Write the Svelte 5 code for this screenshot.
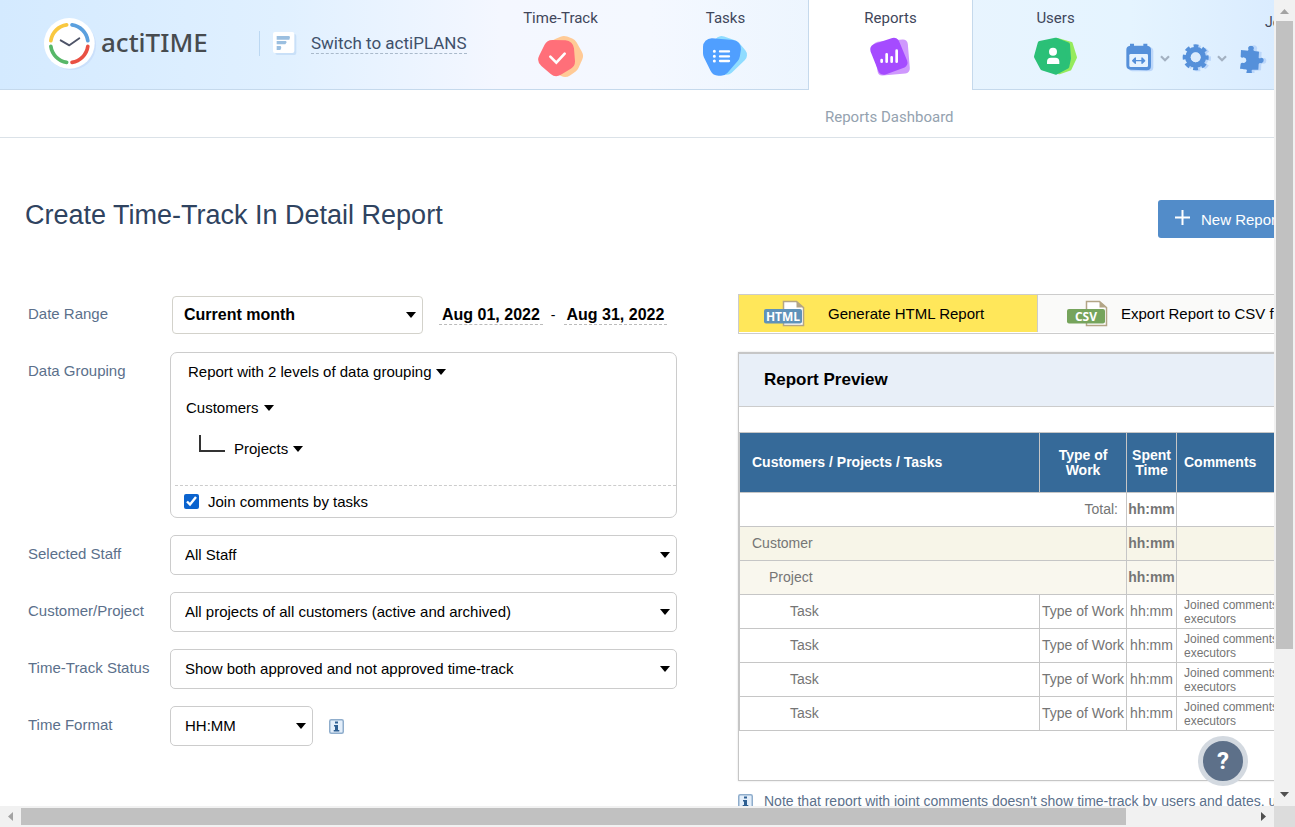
<script>
  let joinComments = $state(true);
  const filters = [
    { id: 'staff', label: 'Selected Staff', value: 'All Staff' },
    { id: 'project', label: 'Customer/Project', value: 'All projects of all customers (active and archived)' },
    { id: 'status', label: 'Time-Track Status', value: 'Show both approved and not approved time-track' }
  ];
  const tasks = [1, 2, 3, 4];
</script>

{#snippet chevron()}
  <svg class="chev" viewBox="0 0 10 7" aria-hidden="true"><path d="M1 1.200 5 5.200 9 1.200" fill="none" stroke="#a3b1c2" stroke-width="2.200" /></svg>
{/snippet}

{#snippet info()}
  <svg class="info" viewBox="0 0 15 15" aria-hidden="true">
    <rect x=".75" y=".75" width="13.5" height="13.5" rx="1.5" fill="#e3eefa" stroke="#8fadcc" stroke-width="1.5" />
    <path d="M6 2.500h3v2H6zM5 6h4v5h1.300v1.500H4.700V11H6V7.500H5z" fill="#2e5f92" />
  </svg>
{/snippet}

{#snippet fileIcon(label, color)}
  <svg class="file" viewBox="0 0 42 27" aria-hidden="true">
    <path d="M20.500 1.500h13l7 6v18h-20z" fill="#fff" stroke="#b3a586" stroke-width="1.500" />
    <path d="M33.500 1.500v6h7z" fill="#b3a586" />
    <rect x="1" y="9" width="38" height="14.500" rx="2" fill={color} />
    <text x="20" y="21" text-anchor="middle" font-family="Open Sans, sans-serif" font-size="12" font-weight="700" fill="#fff">{label}</text>
  </svg>
{/snippet}

<div class="shell">
  <div class="viewport">
    <div class="page">
      <header>
        <div class="brand">
          <a class="logo" href="#home">
            <svg class="clock" viewBox="129 45 162 162" aria-hidden="true">
              <circle cx="214" cy="130" r="74" fill="#cbe0fb" />
              <circle cx="208" cy="124" r="76" fill="#fff" />
              <g fill="none" stroke-width="11" stroke-linecap="round">
                <path d="M200 68.500A56 56 0 0 0 152.500 116" stroke="#f9c840" />
                <path d="M216 68.500A56 56 0 0 1 263.500 116" stroke="#5ba0de" />
                <path d="M152.500 133A56 56 0 0 0 200 181" stroke="#57b768" />
                <path d="M263.500 133A56 56 0 0 1 216 181" stroke="#e95043" />
              </g>
              <path d="M182 115 208 130 238 109" fill="none" stroke="#4e5468" stroke-width="5.500" stroke-linecap="round" stroke-linejoin="round" />
            </svg>
            <span>actiTIME</span>
          </a>
          <a class="switch" href="#plans">
            <svg viewBox="816 93 78 78" aria-hidden="true">
              <rect x="826" y="102" width="63" height="63" rx="6" fill="#c9e0f8" />
              <rect x="819" y="96" width="64" height="63" rx="6" fill="#fff" />
              <path d="M830 108h38l2 4-2 7h-38zM830 123h28l2 4-4 6h-26zM830 138h12l2 5-3 7h-11z" fill="#9bbfe0" />
            </svg>
            <span>Switch to actiPLANS</span>
          </a>
        </div>
        <nav>
          <a href="#time">Time-Track
            <svg viewBox="111 105 144 129" aria-hidden="true">
              <path d="M176 141 192 134 207 140 223 168 212 193 195 205 165 190Z" fill="#ffca96" stroke="#ffca96" stroke-width="52" stroke-linejoin="round" />
              <path d="M157 146 196 147 199 184 169 202 141 178Z" fill="#ff6f79" stroke="#ff6f79" stroke-width="52" stroke-linejoin="round" />
              <path d="M151 170 169 188 194 161" fill="none" stroke="#fff" stroke-width="8" stroke-linecap="round" />
            </svg>
          </a>
          <a href="#tasks">Tasks
            <svg viewBox="606 105 144 129" aria-hidden="true">
              <path d="M665 130 700 142 719 165 680 202Z" fill="#8fdcff" stroke="#8fdcff" stroke-width="44" stroke-linejoin="round" />
              <path d="M635 141 697 146 694 165 663 201 655 201 635 160Z" fill="#509fff" stroke="#509fff" stroke-width="52" stroke-linejoin="round" />
              <path d="M660 154h27M660 169h27M660 183h27" stroke="#fff" stroke-width="7" stroke-linecap="round" />
              <path d="M643 154h.1M643 169h.1M643 183h.1" stroke="#fff" stroke-width="9" stroke-linecap="round" />
            </svg>
          </a>
          <a href="#reports" class="active">Reports
            <svg viewBox="1101 105 144 129" aria-hidden="true">
              <path d="M1134 140 1209 133 1215 206 1147 212Z" fill="#cf98fd" stroke="#cf98fd" stroke-width="29" stroke-linejoin="round" />
              <path d="M1127 148 1182 130 1206 188 1151 208Z" fill="#a54bff" stroke="#a54bff" stroke-width="33" stroke-linejoin="round" />
              <path d="M1145 180v5M1160 163v22M1175 172v13M1190 152v33" stroke="#fff" stroke-width="8" stroke-linecap="round" />
            </svg>
          </a>
          <a href="#users">Users
            <svg viewBox="216 105 144 129" aria-hidden="true">
              <path d="M292 118 334 130 347 172 330 208 298 219Z" fill="#96eb5c" stroke="#96eb5c" stroke-width="8" stroke-linejoin="round" />
              <path d="M287 120 240 130 229 170 247 204 287 217 321 199 326 175 323 134Z" fill="#2bc077" stroke="#2bc077" stroke-width="14" stroke-linejoin="round" />
              <circle cx="279" cy="155" r="12" fill="#fff" />
              <path d="M261 192v-7q0-12 12-12h13q12 0 12 12v7z" fill="#fff" />
            </svg>
          </a>
        </nav>
        <div class="tools">
          <a class="user" href="#me">John Doe</a>
          <div class="toolrow">
            <button aria-label="Calendar">
              <svg class="tool" viewBox="495 130 90 90" aria-hidden="true">
                <rect x="506" y="143" width="74" height="72" rx="12" fill="#bcd7fa" />
                <path d="M510 138v-6h12v6h28v-6h12v6q11 1 11 12v49q0 13-13 13l-48-2q-13 0-13-13v-47q0-11 11-12z" fill="#5590da" />
                <rect x="508" y="163" width="56" height="39" rx="4" fill="#e6f3ff" />
                <path d="M522 183h28M526 175l-8 8 8 8zM546 175l8 8-8 8z" fill="#5590da" stroke="#5590da" stroke-width="4" stroke-linejoin="round" />
              </svg>
              {@render chevron()}
            </button>
            <button aria-label="Settings">
              <svg class="tool" viewBox="663 130 90 90" aria-hidden="true">
                <g fill="none" stroke="#bcd7fa">
                  <circle cx="711" cy="176" r="24" stroke-width="14" />
                  <circle cx="711" cy="176" r="33" stroke-width="12" stroke-dasharray="14 11.920" stroke-dashoffset="7" />
                </g>
                <g fill="none" stroke="#5590da">
                  <circle cx="704" cy="173" r="23" stroke-width="17" />
                  <circle cx="704" cy="173" r="33" stroke-width="12" stroke-dasharray="14 11.920" stroke-dashoffset="7" />
                </g>
                <circle cx="704" cy="173" r="15" fill="#dcecfd" />
              </svg>
              {@render chevron()}
            </button>
            <button aria-label="Integrations">
              <svg class="tool" viewBox="840 130 90 90" aria-hidden="true">
                <path d="M854 152l20 2q4-2 1-8 2-9 10-9t10 9q-4 7 1 9l12 2-1 18q2 4 8 0 7 0 7 8t-7 9q-6-2-8 2l-1 18-18 1q-4 2 0 8-2 7-9 7t-8-8q4-6-1-8l-18-2 2-18q3-4 8-2 9-1 9-8t-8-9q-6 3-9-2z" fill="#bcd7fa" />
                <path d="M846 151l20 2q4-2 1-8 2-7 9-7t9 7q-4 7 1 9l14 2-1 18q2 4 8 0 7 0 7 8t-7 9q-6-2-8 2l-1 17-18 0q-4 2-1 8-2 7-9 7t-8-8q4-6-1-8l-18-2 2-15q3-4 8-2 9-1 9-8t-8-9q-6 3-9-2z" fill="#5590da" />
              </svg>
            </button>
          </div>
        </div>
      </header>
      <div class="subnav"><a href="#dashboard">Reports Dashboard</a></div>

      <main>
        <div class="heading">
          <h1>Create Time-Track In Detail Report</h1>
          <button class="new">
            <svg viewBox="0 0 15 15" aria-hidden="true"><path d="M7.500 0v15M0 7.500h15" stroke="#fff" stroke-width="2" /></svg>
            New Report
          </button>
        </div>

        <div class="columns">
          <form>
            <label for="range">Date Range</label>
            <div class="line">
              <div class="select range"><select id="range"><option>Current month</option></select></div>
              <div class="dates">
                <button type="button">Aug 01, 2022</button><span>-</span><button type="button">Aug 31, 2022</button>
              </div>
            </div>

            <span class="label">Data Grouping</span>
            <div class="grouping">
              <button type="button" class="drop levels">Report with 2 levels of data grouping</button>
              <button type="button" class="drop">Customers</button>
              <div class="nested"><i></i><button type="button" class="drop">Projects</button></div>
              <div class="join">
                <input type="checkbox" id="join" bind:checked={joinComments} />
                <label for="join">Join comments by tasks</label>
              </div>
            </div>

            {#each filters as f}
              <label for={f.id}>{f.label}</label>
              <div class="select"><select id={f.id}><option>{f.value}</option></select></div>
            {/each}

            <label for="format">Time Format</label>
            <div class="line">
              <div class="select format"><select id="format"><option>HH:MM</option></select></div>
              {@render info()}
            </div>
          </form>

          <section>
            <div class="actions">
              <button class="html">{@render fileIcon('HTML', '#5f92b9')}<span>Generate HTML Report</span></button>
              <button class="csv">{@render fileIcon('CSV', '#76a45c')}<span>Export Report to CSV file</span></button>
            </div>
            <div class="preview">
              <h2>Report Preview</h2>
              <table>
                <colgroup><col class="c1" /><col class="c2" /><col class="c3" /><col /></colgroup>
                <thead>
                  <tr><th class="left">Customers / Projects / Tasks</th><th>Type of Work</th><th>Spent Time</th><th class="left com">Comments</th></tr>
                </thead>
                <tbody>
                  <tr><td colspan="2" class="total">Total:</td><td class="time"><b>hh:mm</b></td><td></td></tr>
                  <tr class="customer"><td colspan="2">Customer</td><td class="time"><b>hh:mm</b></td><td></td></tr>
                  <tr class="project"><td colspan="2" class="lvl2">Project</td><td class="time"><b>hh:mm</b></td><td></td></tr>
                  {#each tasks as t (t)}
                    <tr><td class="lvl3">Task</td><td class="time">Type of Work</td><td class="time">hh:mm</td><td class="com small">Joined comments of<br />executors</td></tr>
                  {/each}
                </tbody>
              </table>
            </div>
            <p class="note">{@render info()}<span>Note that report with joint comments doesn't show time-track by users and dates, unlike</span></p>
          </section>
        </div>
      </main>
    </div>
    <button class="help" aria-label="Help">?</button>
  </div>

  <div class="bar v" aria-hidden="true">
    <svg viewBox="0 0 21 21"><path d="M6 14h9l-4.500-5z" fill="#a3a3a3" /></svg>
    <div class="thumb"></div><div class="rest"></div>
    <svg viewBox="0 0 21 21"><path d="M6 7h9l-4.500 5z" fill="#505050" /></svg>
  </div>
  <div class="bar h" aria-hidden="true">
    <svg viewBox="0 0 21 21"><path d="M13 6v9l-5-4.500z" fill="#a3a3a3" /></svg>
    <div class="thumb"></div><div class="rest"></div>
    <svg viewBox="0 0 21 21"><path d="M8 6v9l5-4.500z" fill="#505050" /></svg>
  </div>
  <div class="corner"></div>
</div>

<style>
  :global(body) { margin: 0; background: #fff; }
  .shell {
    display: grid;
    grid-template-columns: minmax(0, 1fr) 21px;
    grid-template-rows: minmax(0, 1fr) 21px;
    height: 100vh;
    font-family: "Liberation Sans", Arial, sans-serif;
    font-size: 15px;
    color: #000;
  }
  .viewport { position: relative; overflow: hidden; }
  .page { min-width: 1420px; }
  button { font: inherit; color: inherit; border: 0; background: none; padding: 0; cursor: pointer; }
  a { color: inherit; text-decoration: none; }
  svg { display: block; flex: none; }

  header {
    display: flex;
    height: 90px;
    box-sizing: border-box;
    font-family: Roboto, sans-serif;
    color: #40465a;
    background: linear-gradient(90deg, #d4eaff 0, #e0f0ff 280px, #f4f7ff 500px, #f4f8ff 650px, #e9f4fe 900px, #e5f4ff 1130px, #daecff 1274px);
    box-shadow: inset 0 -1px #c5d9ec;
  }
  .brand { display: flex; align-items: center; width: 478px; flex: none; padding: 0 0 3px 43px; box-sizing: border-box; }
  .logo { display: flex; align-items: center; gap: 4px; width: 216px; height: 54px; color: #474b4f; font: 500 26px/54px "Noto Sans", sans-serif; }
  .logo span { margin-top: -4px; }
  .clock { width: 54px; height: 54px; }
  .switch { display: flex; align-items: center; gap: 13px; height: 25px; padding-left: 12px; border-left: 1px solid #bcd8f2; font-size: 17px; line-height: 20px; color: #40506a; }
  .switch svg { width: 26px; height: 26px; }
  .switch span { border-bottom: 1px dashed #a9b9ca; }
  nav { display: flex; flex: none; font-size: 15px; line-height: 18px; }
  nav a { display: flex; flex-direction: column; align-items: center; gap: 8px; width: 165px; box-sizing: border-box; padding-top: 9px; }
  nav svg { width: 48px; height: 43px; }
  nav a.active { background: #fff; border: solid #c5d9ec; border-width: 0 1px; }
  .tools { margin-left: -13px; }
  .user { display: block; padding: 13px 0 0 140px; font-size: 14px; line-height: 18px; }
  .toolrow { display: flex; gap: 12px; padding-top: 12px; }
  .toolrow button { display: flex; align-items: center; gap: 5px; }
  .tool { width: 30px; height: 30px; }
  .chev { width: 10px; height: 7px; }
  .subnav { height: 48px; box-sizing: border-box; border-bottom: 1px solid #dbe2e8; padding: 17px 0 0 825px; font: 15px/20px Roboto, sans-serif; color: #94a2af; }

  main { padding: 62px 25px 0; }
  .heading { display: flex; justify-content: space-between; height: 38px; }
  h1 { margin: 0; font-size: 27px; line-height: 30px; font-weight: 400; color: #2f4360; }
  .new { display: flex; align-items: center; gap: 11px; width: 237px; padding-left: 17px; border-radius: 3px; background: #528cc9; color: #fff; }
  .new svg { width: 15px; height: 15px; margin-bottom: 3px; }

  .columns { display: grid; grid-template-columns: 649px minmax(0, 1fr); gap: 61px; padding: 56px 0 0 3px; }
  form { display: grid; grid-template-columns: 142px minmax(0, 1fr); row-gap: 17px; align-content: start; padding-top: 1px; }
  form > label, .label { line-height: 38px; color: #5b708b; }
  .line { display: flex; align-items: center; gap: 16px; height: 40px; }
  .select { position: relative; }
  .select::after, .drop::after { content: ""; border: 5px solid transparent; border-top: 6px solid #000; border-bottom: 0; }
  .select::after { position: absolute; right: 7px; top: 17px; pointer-events: none; }
  .range::after { top: 16px; }
  select { display: block; width: 100%; height: 40px; box-sizing: border-box; padding: 0 24px 2px 14px; appearance: none; border: 1px solid #ccc; border-radius: 5px; background: #fff; font: inherit; color: #000; }
  .range { width: 251px; margin-left: 2px; }
  .range select { height: 38px; padding-left: 11px; border-color: #d3d2cb; border-radius: 4px; font-size: 16px; font-weight: 700; }
  .format { width: 143px; }
  .dates { display: flex; align-items: center; font-size: 16px; gap: 8px; }
  .dates button { padding: 0 3px; border-bottom: 1px dashed #bbb; font-weight: 700; line-height: 18px; }
  .dates span { font-size: 14px; }
  .info { width: 15px; height: 15px; }
  .grouping { display: flex; flex-direction: column; align-items: flex-start; height: 166px; box-sizing: border-box; border: 1px solid #ccc; border-radius: 7px; padding: 10px 0 0 4px; }
  .drop { display: flex; align-items: center; gap: 5px; margin-left: 11px; line-height: 18px; }
  .drop.levels { margin: 0 0 18px 13px; }
  .nested { display: flex; margin: 18px 0 0 24px; }
  .nested i { width: 24px; height: 15px; border: solid #333; border-width: 0 0 2px 2px; margin-bottom: 13px; }
  .nested .drop { margin: 5px 0 0 9px; height: 18px; }
  .join { display: flex; align-items: center; gap: 9px; align-self: stretch; flex: 1; margin-top: 20px; border-top: 1px dashed #ccc; padding-left: 9px; }
  .join input { width: 15px; height: 15px; margin: 0; accent-color: #0b63ce; }

  .actions { display: flex; height: 40px; box-sizing: border-box; border: 1px solid #ccc; border-right: 0; padding-bottom: 1px; }
  .actions button { display: flex; align-items: center; }
  .html { width: 299px; flex: none; background: #ffe75a; border-right: 1px solid #ccc; padding-left: 24px; gap: 23px; }
  .csv { flex: 1; background: #fafaf9; padding-left: 28px; gap: 13px; }
  .file { width: 42px; height: 27px; }
  .preview { margin-top: 18px; height: 429px; box-sizing: border-box; border: 1px solid #c6c6c6; border-top-width: 2px; box-shadow: 0 0 2px #ddd; }
  h2 { margin: 0 0 25px; padding-left: 25px; font-size: 17px; line-height: 52px; background: #e8eff8; border-bottom: 1px solid #ccc; }
  table { width: 100%; table-layout: fixed; border-collapse: collapse; font-size: 14px; line-height: 15px; color: #757575; }
  .c1 { width: 300px; }
  .c2 { width: 87px; }
  .c3 { width: 50px; }
  th, td { border: 1px solid #c6c6c6; box-sizing: border-box; height: 34px; padding: 0 2px 0 12px; text-align: left; }
  th { height: 60px; background: #366a99; color: #fff; padding: 0; text-align: center; }
  th.left { text-align: left; padding-left: 12px; }
  th.com, td.com { padding-left: 7px; }
  td.small { font-size: 12px; line-height: 14px; }
  td.total { text-align: right; padding-right: 8px; }
  td.time { padding: 0; text-align: center; white-space: nowrap; }
  td.lvl2 { padding-left: 29px; }
  td.lvl3 { padding-left: 50px; }
  .customer { background: #f7f5e8; }
  .project { background: #f9f7ee; }
  .note { display: flex; gap: 11px; align-items: center; margin: 11px 0 0; font-size: 14px; line-height: 18px; color: #5b708b; white-space: nowrap; }
  .help { position: absolute; right: 26px; bottom: 20px; width: 50px; height: 50px; border: 5px solid #d3d9e0; border-radius: 50%; background: #5d7089; color: #fff; font: 700 24px Roboto, sans-serif; }

  .bar { display: flex; background: #f1f1f1; }
  .bar svg { width: 21px; height: 21px; }
  .v { flex-direction: column; grid-column: 2; grid-row: 1; }
  .h { grid-column: 1; grid-row: 2; }
  .thumb { background: #c1c1c1; }
  .v .thumb { flex: 628; margin: 0 2px; }
  .v .rest { flex: 136; }
  .h .thumb { flex: 1105; margin: 2px 0; }
  .h .rest { flex: 127; }
  .corner { background: #dcdcdc; }
</style>
